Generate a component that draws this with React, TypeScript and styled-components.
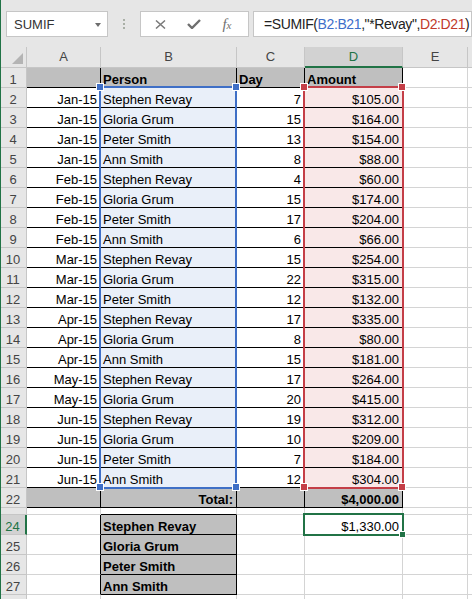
import React from "react";
import styled, { createGlobalStyle } from "styled-components";

const GlobalStyle = createGlobalStyle`
  html, body {
    margin: 0;
    padding: 0;
    background: #ffffff;
    overflow: hidden;
  }
  body {
    font-family: "Liberation Sans", Arial, sans-serif;
  }
`;

const GREEN = "#217346";
const BLUE = "#3f6fc6";
const RED = "#c43e47";
const GRID = "#d4d4d4";
const HEAD_LINE = "#c6c6c6";

const Window = styled.div`
  position: relative;
  width: 472px;
  height: 599px;
  overflow: hidden;
  background: #ffffff;
  &::before {
    content: "";
    position: absolute;
    left: 0;
    top: 0;
    bottom: 0;
    width: 1px;
    background: ${GREEN};
    z-index: 10;
  }
`;

const FormulaBar = styled.div`
  height: 47px;
  box-sizing: border-box;
  background: #e6e6e6;
  display: flex;
  align-items: flex-start;
  padding: 11px 0 0 6px;
`;

const Box = styled.div`
  height: 26px;
  box-sizing: border-box;
  background: #ffffff;
  border: 1px solid ${HEAD_LINE};
  display: flex;
  align-items: center;
`;

const NameBox = styled(Box)`
  width: 102px;
  padding: 0 6px 0 7px;
  justify-content: space-between;
  font-size: 13px;
  color: #333333;
`;

const DropArrow = styled.span`
  width: 0;
  height: 0;
  border-left: 3.5px solid transparent;
  border-right: 3.5px solid transparent;
  border-top: 4px solid #6d6d6d;
  margin-top: 1px;
`;

const Grip = styled.div`
  width: 32px;
  height: 26px;
  display: flex;
  flex-direction: column;
  align-items: center;
  justify-content: center;
  gap: 2px;
  span {
    width: 2px;
    height: 2px;
    background: #a9afa6;
  }
`;

const FxGroup = styled(Box)`
  width: 109px;
  justify-content: space-around;
  padding: 0 6px 0 4px;
  color: #777777;
`;

const FxLabel = styled.span`
  font-family: "Liberation Serif", "Times New Roman", serif;
  font-style: italic;
  font-size: 15px;
  color: #707070;
  small {
    font-size: 11px;
  }
`;

const FormulaInput = styled(Box)`
  flex: 1;
  margin-left: 4px;
  padding-left: 10px;
  font-size: 14px;
  letter-spacing: -0.4px;
  color: #222222;
  white-space: nowrap;
  overflow: hidden;
`;

const Ref = styled.span<{ $c: string }>`
  color: ${(p) => p.$c};
`;

const Sheet = styled.div`
  display: grid;
  grid-template-columns: 27px 74px 136px 68px 98px 65px 1fr;
  grid-template-rows: 21px repeat(22, 20px) 7px repeat(5, 20px);
  font-size: 13px;
  color: #000000;
`;

const Corner = styled.div`
  box-sizing: border-box;
  background: #e6e6e6;
  border-right: 1px solid ${HEAD_LINE};
  border-bottom: 1px solid ${HEAD_LINE};
  display: flex;
  align-items: flex-end;
  justify-content: flex-end;
  padding: 0 3px 3px 0;
`;

const ColHead = styled.div<{ $sel?: boolean }>`
  box-sizing: border-box;
  background: ${(p) => (p.$sel ? "#d2d2d2" : "#e6e6e6")};
  color: ${(p) => (p.$sel ? GREEN : "#444444")};
  border-right: 1px solid ${HEAD_LINE};
  border-bottom: ${(p) => (p.$sel ? `2px solid ${GREEN}` : `1px solid ${HEAD_LINE}`)};
  display: flex;
  align-items: center;
  justify-content: center;
  line-height: 20px;
`;

const RowHead = styled.div<{ $sel?: boolean }>`
  box-sizing: border-box;
  background: ${(p) => (p.$sel ? "#d2d2d2" : "#e6e6e6")};
  color: ${(p) => (p.$sel ? GREEN : "#444444")};
  border-right: ${(p) => (p.$sel ? `2px solid ${GREEN}` : `1px solid ${HEAD_LINE}`)};
  border-bottom: 1px solid ${HEAD_LINE};
  display: flex;
  align-items: flex-end;
  justify-content: center;
  line-height: 15px;
  overflow: hidden;
`;

const Cell = styled.div<{
  $bg: string;
  $bold?: boolean;
  $right?: boolean;
  $rb: string;
  $bb: string;
}>`
  box-sizing: border-box;
  background: ${(p) => p.$bg};
  font-weight: ${(p) => (p.$bold ? 700 : 400)};
  border-right: 1px solid ${(p) => p.$rb};
  border-bottom: 1px solid ${(p) => p.$bb};
  display: flex;
  align-items: flex-end;
  justify-content: ${(p) => (p.$right ? "flex-end" : "flex-start")};
  padding: 0 3px 0 2px;
  line-height: 15px;
  white-space: nowrap;
  overflow: hidden;
`;

const Range = styled.div<{ $c: string }>`
  position: absolute;
  box-sizing: border-box;
  border: 2px solid ${(p) => p.$c};
  pointer-events: none;
`;

const Handle = styled.div<{ $c: string }>`
  position: absolute;
  width: 8px;
  height: 8px;
  box-sizing: border-box;
  background: ${(p) => p.$c};
  border: 1px solid #ffffff;
`;

type Row = [string, string, string, string];

const data: Row[] = [
  ["", "Person", "Day", "Amount"],
  ["Jan-15", "Stephen Revay", "7", "$105.00"],
  ["Jan-15", "Gloria Grum", "15", "$164.00"],
  ["Jan-15", "Peter Smith", "13", "$154.00"],
  ["Jan-15", "Ann Smith", "8", "$88.00"],
  ["Feb-15", "Stephen Revay", "4", "$60.00"],
  ["Feb-15", "Gloria Grum", "15", "$174.00"],
  ["Feb-15", "Peter Smith", "17", "$204.00"],
  ["Feb-15", "Ann Smith", "6", "$66.00"],
  ["Mar-15", "Stephen Revay", "15", "$254.00"],
  ["Mar-15", "Gloria Grum", "22", "$315.00"],
  ["Mar-15", "Peter Smith", "12", "$132.00"],
  ["Apr-15", "Stephen Revay", "17", "$335.00"],
  ["Apr-15", "Gloria Grum", "8", "$80.00"],
  ["Apr-15", "Ann Smith", "15", "$181.00"],
  ["May-15", "Stephen Revay", "17", "$264.00"],
  ["May-15", "Gloria Grum", "20", "$415.00"],
  ["Jun-15", "Stephen Revay", "19", "$312.00"],
  ["Jun-15", "Gloria Grum", "10", "$209.00"],
  ["Jun-15", "Peter Smith", "7", "$184.00"],
  ["Jun-15", "Ann Smith", "12", "$304.00"],
  ["", "Total:", "", "$4,000.00"],
];

const names = ["Stephen Revay", "Gloria Grum", "Peter Smith", "Ann Smith"];

const rowNums = [...Array.from({ length: 22 }, (_, i) => i + 1), 23, 24, 25, 26, 27, 28];

// content of a cell by row number and column index (A = 0)
const textAt = (r: number, c: number) => {
  if (r <= 22) return c < 4 ? data[r - 1][c] : "";
  if (r >= 24 && r <= 27 && c === 1) return names[r - 24];
  if (r === 24 && c === 3) return "$1,330.00";
  return "";
};

const styleAt = (r: number, c: number) => {
  let bg = "#ffffff";
  let rb = GRID;
  let bb = GRID;
  let bold = false;
  let right = false;
  if (r <= 22 && c < 4) {
    rb = "#000";
    bb = "#000";
    if (r === 1 || r === 22) {
      bg = "#bfbfbf";
      bold = true;
    } else if (c === 1) bg = "#e9eff9";
    else if (c === 3) bg = "#f9e8e8";
    right = r === 1 ? false : c !== 1 || r === 22;
  }
  if (r === 23 && c === 1) bb = "#000";
  if (r >= 24 && r <= 27) {
    if (c === 0) rb = "#000";
    if (c === 1) {
      rb = "#000";
      bb = "#000";
      bg = "#bfbfbf";
      bold = true;
    }
    if (c === 3) right = true;
  }
  return { bg, rb, bb, bold, right };
};

const corners = (x1: number, y1: number, x2: number, y2: number) => [
  [x1, y1],
  [x2, y1],
  [x1, y2],
  [x2, y2],
];

export default function App() {
  return (
    <Window>
      <GlobalStyle />
      <FormulaBar>
        <NameBox>
          SUMIF
          <DropArrow />
        </NameBox>
        <Grip>
          <span />
          <span />
          <span />
        </Grip>
        <FxGroup>
          <svg width="11" height="9" viewBox="0 0 11 9">
            <path d="M1 0.5 L10 8.5 M10 0.5 L1 8.5" stroke="#7a7a7a" strokeWidth="1.5" fill="none" />
          </svg>
          <svg width="14" height="10" viewBox="0 0 14 10">
            <path d="M1 5 L5 9 L13 1" stroke="#6f6f6f" strokeWidth="2.4" fill="none" />
          </svg>
          <FxLabel>
            f<small>x</small>
          </FxLabel>
        </FxGroup>
        <FormulaInput>
          =SUMIF(<Ref $c="#3d6ec9">B2:B21</Ref>,"*Revay",<Ref $c="#c0392b">D2:D21</Ref>)
        </FormulaInput>
      </FormulaBar>

      <Sheet>
        <Corner>
          <svg width="11" height="11" viewBox="0 0 11 11">
            <polygon points="11,0 11,11 0,11" fill="#b4b4b4" />
          </svg>
        </Corner>
        {["A", "B", "C", "D", "E", ""].map((l, i) => (
          <ColHead key={i} $sel={l === "D"}>
            {l}
          </ColHead>
        ))}
        {rowNums.map((r) => (
          <React.Fragment key={r}>
            {/* row 23 is hidden, row 28 only peeks in at the bottom edge */}
            <RowHead $sel={r === 24}>{r === 23 || r === 28 ? "" : r}</RowHead>
            {[0, 1, 2, 3, 4, 5].map((c) => {
              const s = styleAt(r, c);
              return (
                <Cell key={c} $bg={s.bg} $rb={s.rb} $bb={s.bb} $bold={s.bold} $right={s.right}>
                  {textAt(r, c)}
                </Cell>
              );
            })}
          </React.Fragment>
        ))}
      </Sheet>

      <Range $c={BLUE} style={{ left: 99, top: 86, width: 138, height: 403 }} />
      {corners(100, 87, 236, 487).map(([x, y], i) => (
        <Handle key={`b${i}`} $c={BLUE} style={{ left: x - 4, top: y - 4 }} />
      ))}
      <Range $c={RED} style={{ left: 303, top: 86, width: 101, height: 403 }} />
      {corners(304, 87, 402, 487).map(([x, y], i) => (
        <Handle key={`r${i}`} $c={RED} style={{ left: x - 4, top: y - 4 }} />
      ))}
      <Range $c={GREEN} style={{ left: 303, top: 513, width: 101, height: 23 }} />
      <Handle $c={GREEN} style={{ left: 399, top: 531, width: 7, height: 7 }} />
    </Window>
  );
}
